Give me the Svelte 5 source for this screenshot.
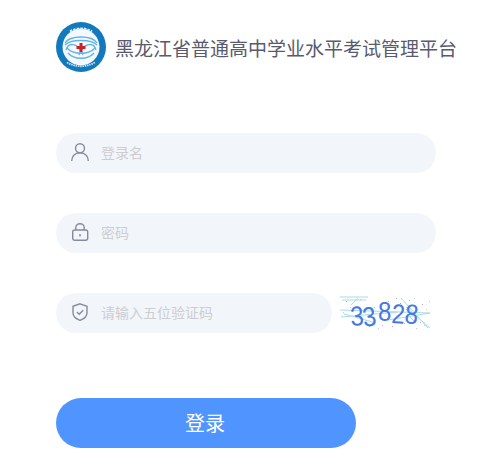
<script>
    let username = "";
    let password = "";
    let captcha = "";

    // noise dots on the captcha picture
    const dots = [
        [8, 6, "#b9a0d0"], [14, 27, "#d0aeb0"], [22, 4, "#a0cfe4"], [31, 31, "#c0a8d8"], [44, 30, "#d8b0cc"],
        [50, 6, "#b4b4dc"], [54, 31, "#d0a0c4"], [62, 8, "#c898a8"], [66, 28, "#a4d0b8"], [71, 5, "#d0a8b8"],
        [74, 10, "#a8cfe4"], [78, 33, "#b4d0d0"], [84, 9, "#c0a8dc"], [88, 14, "#b4e4a8"], [76, 3, "#a8e4cc"],
        [5, 17, "#a8cfdc"], [36, 12, "#c8bcdc"], [58, 3, "#b8aab8"], [91, 6, "#bccce4"], [68, 14, "#a4b8d0"],
        [12, 12, "#c8b0d8"], [47, 10, "#c0d4e4"], [82, 27, "#d4b4c8"], [86, 30, "#b8d8c8"], [40, 33, "#c8c0e0"]
    ];

    const digits = [
        { value: "3", x: 13, y: 31, angle: -4 },
        { value: "3", x: 26, y: 32, angle: -8 },
        { value: "8", x: 40, y: 26, angle: 0 },
        { value: "2", x: 53, y: 28, angle: 4 },
        { value: "8", x: 66, y: 28, angle: 6 }
    ];
</script>

<div class="login">
    <header class="brand">
        <svg class="logo" viewBox="0 0 50 50" aria-hidden="true">
            <circle cx="25" cy="25" r="25" fill="#1279bd" />
            <circle cx="25" cy="25" r="18.500" fill="#f4f9fd" />
            <g fill="none" stroke="#62b4e6" stroke-width="1.300">
                <path d="M9 21C14 13 36 13 41 21" />
                <path d="M9 23C14 17 36 17 41 23" />
                <path d="M10 28C12 20 22 20 27 33" />
                <path d="M40 28C38 20 28 20 23 33" />
                <path d="M12 31C18 38 32 38 38 31" />
                <path d="M11 26C17 33 33 33 39 26" />
            </g>
            <path d="M23.500 21h3v3h3v3h-3v3h-3v-3h-3v-3h3z" fill="#c8202c" />
            <path d="M14 9.500q11-6 22 0" fill="none" stroke="#d7ebf7" stroke-width="2.200" stroke-dasharray="2.500 1.100" />
            <path d="M11 40.500q14 7.500 28 0" fill="none" stroke="#cfe5f4" stroke-width="1.800" stroke-dasharray="1.500 .8" />
        </svg>
        <h1>黑龙江省普通高中学业水平考试管理平台</h1>
    </header>

    <form class="fields" on:submit|preventDefault>
        <label class="field">
            <svg class="icon" viewBox="0 0 18 18" aria-hidden="true">
                <circle cx="9" cy="5.200" r="4.500" />
                <path d="M.7 18c0-4.800 3.400-8.200 8.300-8.200s8.300 3.400 8.300 8.200" />
            </svg>
            <input type="text" placeholder="登录名" bind:value={username} />
        </label>

        <label class="field">
            <svg class="icon" viewBox="0 0 18 18" aria-hidden="true">
                <rect x="1.700" y="7" width="15" height="10.300" rx="2" />
                <path d="M4.800 7V4.500a4.200 3.800 0 0 1 8.400 0V7" />
                <path d="M9 11v2.500" />
            </svg>
            <input type="text" placeholder="密码" bind:value={password} />
        </label>

        <div class="captcha-row">
            <label class="field grow">
                <svg class="icon" viewBox="0 0 18 18" aria-hidden="true">
                    <path d="M9 .8l7 2.500v6.500c0 3.700-3 6.200-7 7.500-4-1.300-7-3.800-7-7.500V3.300z" />
                    <path d="M5.800 9l2.400 2.300 4-4" />
                </svg>
                <input type="text" placeholder="请输入五位验证码" bind:value={captcha} />
            </label>
            <svg class="captcha" viewBox="0 0 95 36" aria-label="验证码图片">
                <g stroke="#a9dbe8" stroke-width="1" fill="none">
                    <path d="M2 2L30 2" />
                    <path d="M4 5L28 5" />
                    <path d="M2 15L92 18" />
                    <path d="M3 22L60 17" />
                    <path d="M6 19L38 28" />
                    <path d="M50 25L92 18" />
                    <path d="M63 3L90 33" />
                    <path d="M68 12L92 33" />
                    <path d="M20 3L13 10" />
                    <path d="M72 22L78 28" />
                </g>
                {#each dots as [x, y, fill]}
                    <rect {x} {y} width="1" height="1" {fill} />
                {/each}
                <g class="digits">
                    {#each digits as d}
                        <text transform="translate({d.x} {d.y}) rotate({d.angle}) scale(1 1.150)">{d.value}</text>
                    {/each}
                </g>
            </svg>
        </div>

        <button type="submit">登录</button>
    </form>
</div>

<style>
    :global(body) {
        background: #fff;
    }

    .login {
        padding: 22px 0 0 56px;
        font-family: "Microsoft YaHei", "Noto Sans CJK SC", "Liberation Sans", sans-serif;
    }

    .brand {
        display: flex;
        align-items: center;
        gap: 9px;
        height: 50px;
    }

    .logo {
        width: 50px;
        height: 50px;
        flex: none;
    }

    h1 {
        margin: 0;
        font-size: 19px;
        font-weight: 400;
        color: #5a5a6e;
        white-space: nowrap;
    }

    .fields {
        display: flex;
        flex-direction: column;
        gap: 40px;
        width: 380px;
        margin-top: 61px;
    }

    .field {
        display: flex;
        align-items: center;
        gap: 12px;
        height: 40px;
        padding-left: 15px;
        box-sizing: border-box;
        background: #f2f6fb;
        border-radius: 20px;
    }

    .grow {
        width: 276px;
        flex: none;
    }

    .icon {
        width: 18px;
        height: 18px;
        margin-top: -2px;
        flex: none;
        fill: none;
        stroke: #868b98;
        stroke-width: 1.400;
    }

    input {
        flex: 1;
        min-width: 0;
        border: 0;
        outline: 0;
        padding: 0 0 3px;
        background: transparent;
        font: inherit;
        font-size: 14px;
        color: #555;
    }

    input::placeholder {
        color: #cdcdd0;
        opacity: 1;
    }

    .captcha-row {
        display: flex;
        align-items: center;
        gap: 6px;
    }

    .captcha {
        width: 95px;
        height: 36px;
        flex: none;
        overflow: visible;
    }

    .digits text {
        font-family: "Liberation Sans", sans-serif;
        font-size: 24px;
        fill: #4479e0;
    }

    button {
        width: 300px;
        height: 50px;
        margin-top: 25px;
        padding: 0 2px 2px 0;
        border: 0;
        border-radius: 25px;
        background: #4f94ff;
        color: #fff;
        font: inherit;
        font-size: 20px;
        cursor: pointer;
    }
</style>
